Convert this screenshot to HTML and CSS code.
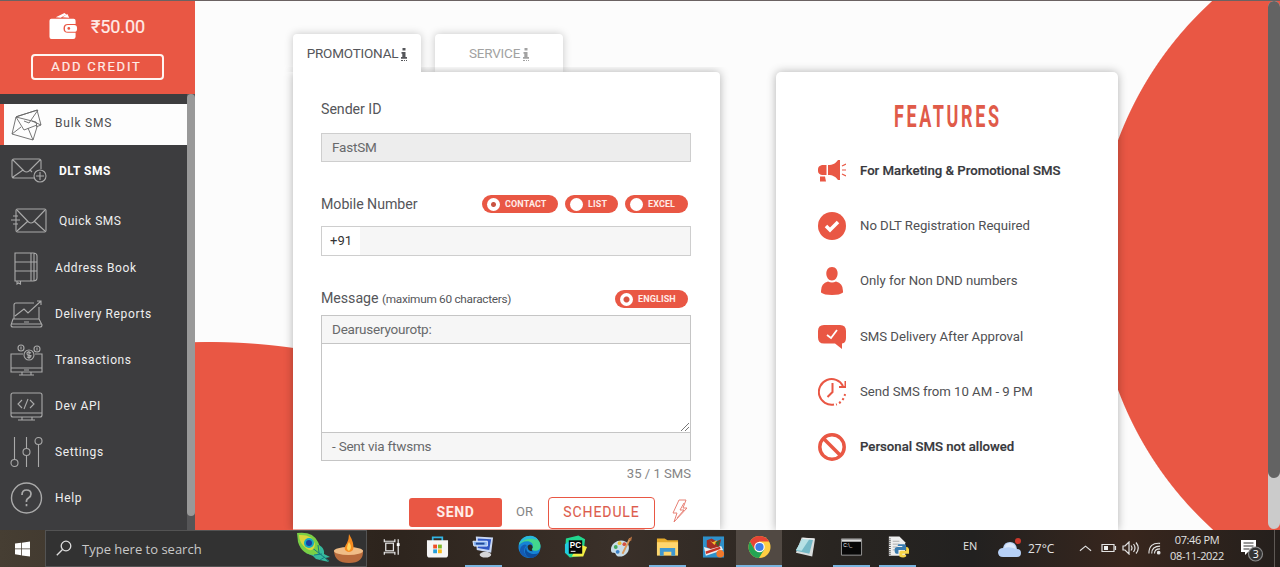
FILE: index.html
```html
<!DOCTYPE html>
<html lang="en">
<head>
<meta charset="utf-8">
<title>Bulk SMS</title>
<link rel="stylesheet" href="styles.css">
</head>
<body>
<div class="screen">
  <div class="page">
    <aside class="sidebar">
      <div class="credit">
        <div class="balance">
          <svg class="wallet" viewBox="0 0 30 28"><path fill="#fff" d="M7 5 16 .5l2 1.500-6 3.500zM14 5l5-3.500 2 4zM2.500 6.500h23q2 0 2 2V12h-8q-4.500 0-4.500 4.500t4.500 4.500h8v4q0 2.500-2.500 2.500H2.500Q.500 27.500.500 25V8.500q0-2 2-2z"/><rect x="16.500" y="13" width="12.500" height="7" rx="3" fill="#fff"/><circle cx="20.500" cy="16.500" r="1.400" fill="#e95744"/></svg>
          <span>₹50.00</span>
        </div>
        <div class="add">ADD CREDIT</div>
      </div>
      <div class="menu">
        <nav class="items">
          <div class="item active"><svg viewBox="0 0 34 34"><path d="M6 9 27 2l4 15-5 2M6 9l2-1 20-6-9 13-5-2M31 17l-9-4M6 9l20 5 1 5-4 13L2 26 6 9l8 13 13-5M2 26l9-7M23 32l-5-12"/></svg><span>Bulk SMS</span></div>
          <div class="item dlt"><svg viewBox="0 0 36 34"><path d="M24 24H3q-2 0-2-2V7q0-2 2-2h25q2 0 2 2v8M2 6l11 11q2.500 2 5 0L29 6M2 23l10-7M21 18l-2-2"/><circle cx="29" cy="22" r="6"/><path d="M29 18v8M25 22h8"/></svg><span>DLT SMS</span></div>
          <div class="item quick"><svg viewBox="0 0 36 34"><rect x="5" y="5" width="30" height="23" rx="1.500"/><path d="m6 6 11.500 12q2.500 2 5 0L34 6M6 27l11-10M34 27 23 17M2 12h5M0 16h9M2 20h5"/></svg><span>Quick SMS</span></div>
          <div class="item addr"><svg viewBox="0 0 34 34"><path d="M5 2h18q4 0 4 3v22q0 3-4 3H5zM21 2v28M24 2v28M5 11h22M5 20h22M7 30v3l1.500-1 2 1v-3"/></svg><span>Address Book</span></div>
          <div class="item"><svg viewBox="0 0 34 34"><path d="M4 22V8q0-2 2-2h18M29 10v12M3 22h26l3 6q0 2-2 2H3q-2 0-2-2zM1 27h31M14 25h5M5 19l9-7 4 4L31 4M27 4h4v4"/></svg><span>Delivery Reports</span></div>
          <div class="item"><svg viewBox="0 0 34 34"><path d="M13 11H1v18h31V11h-7M1 25h31M12 29v3M21 29v3M9 32h15"/><circle cx="19" cy="12" r="5"/><circle cx="11" cy="5" r="3"/><circle cx="27" cy="6" r="3"/><path d="M21 10q-4-2-4 .5t4 2q0 3-4 1.500M19 8v8M11 3.500v3M27 4.500v3M14 27h5"/></svg><span>Transactions</span></div>
          <div class="item"><svg viewBox="0 0 34 34"><rect x="1" y="4" width="31" height="24" rx="2"/><path d="M1 24h31M12 28v3M22 28v3M8 31h17M12 11l-4 4 4 4M20 11l4 4-4 4M18 10l-4 10"/></svg><span>Dev API</span></div>
          <div class="item"><svg viewBox="0 0 34 34"><circle cx="4.500" cy="28" r="3.500"/><circle cx="16.500" cy="17" r="3.500"/><circle cx="28.500" cy="6" r="3.500"/><path d="M4.500 2v22.500M16.500 2v11.500M16.500 20.500V32M28.500 9.500V32"/></svg><span>Settings</span></div>
          <div class="item"><svg viewBox="0 0 34 34"><circle cx="16.500" cy="17" r="15" stroke-width="1.400"/><path stroke-width="1.700" d="M12 14q0-5 4.500-5t4.500 4q0 2.500-2.500 4t-2 4M16.500 23v2.200"/></svg><span>Help</span></div>
        </nav>
        <div class="side-scroll"><div class="side-thumb"></div></div>
      </div>
    </aside>

    <main class="main">
      <section class="form-col">
        <div class="tabs">
          <div class="tab current">PROMOTIONAL <b class="info"><svg viewBox="0 0 6 11"><path d="M1.500 0h3v2.500h-3zM.5 4h4v5H6v1.800H0V9h1.300V5.800H.5z"/></svg></b></div>
          <div class="tab other">SERVICE <b class="info"><svg viewBox="0 0 6 11"><path d="M1.500 0h3v2.500h-3zM.5 4h4v5H6v1.800H0V9h1.300V5.800H.5z"/></svg></b></div>
        </div>
        <div class="card form">
          <div class="label sender">Sender ID</div>
          <div class="field readonly">FastSM</div>
          <div class="row mobile">
            <div class="label">Mobile Number</div>
            <div class="pills">
              <span class="pill contact"><i class="dot on"></i>CONTACT</span>
              <span class="pill list"><i class="dot"></i>LIST</span>
              <span class="pill excel"><i class="dot"></i>EXCEL</span>
            </div>
          </div>
          <div class="field phone"><span class="code">+91</span></div>
          <div class="row message">
            <div class="label">Message <small>(maximum 60 characters)</small></div>
            <div class="pills"><span class="pill english"><i class="dot on wide"></i>ENGLISH</span></div>
          </div>
          <div class="compose">
            <div class="line">Dearuseryourotp:</div>
            <div class="area"><svg viewBox="0 0 10 10"><path d="M1 9 9 1M5 9l4-4" stroke="#777" fill="none"/></svg></div>
            <div class="line">- Sent via ftwsms</div>
          </div>
          <div class="count">35 / 1 SMS</div>
          <div class="actions">
            <div class="send">SEND</div>
            <span class="or">OR</span>
            <div class="schedule">SCHEDULE</div>
            <svg class="bolt" viewBox="0 0 16 24"><path d="M7 1h7l-3 8h4L2 23l3-9H1z"/><path d="M12 4 8 11h4L5 19"/></svg>
          </div>
        </div>
      </section>

      <section class="card features">
        <svg class="title" viewBox="0 0 120 30"><text x="0" y="26.500" textLength="181" transform="scale(.58 1)">FEATURES</text></svg>
        <div class="feature strong"><svg viewBox="0 0 28 28"><path d="M10 8c5 0 8-2 10-5h2v20h-2c-2-3-5-5-10-5zM8.500 8v10H4q-4-1-4-4v-2q0-3 4-4zM2 19.500h5l1 5H2z"/><path d="m24 9 4-2M24 13h4M24 17l4 2" stroke="#e95744" stroke-width="1.200"/></svg><span>For Marketing &amp; Promotional SMS</span></div>
        <div class="feature"><svg viewBox="0 0 28 28"><circle cx="14" cy="14" r="14"/><path d="m8 14 4 4 8-8" fill="none" stroke="#fff" stroke-width="3.500"/></svg><span>No DLT Registration Required</span></div>
        <div class="feature"><svg viewBox="0 0 28 28"><path d="M14 0c8 0 7 13.500 0 13.500S6 0 14 0zM3 24q0-8 7-9.500 4 2 8 0 7 1.500 7 9.500v1.500Q22 28 14 28T3 25.500z"/></svg><span>Only for Non DND numbers</span></div>
        <div class="feature"><svg viewBox="0 0 28 28"><path d="M6 2h16q6 0 6 6v7q0 5-4 5.500V26l-7-5.500H6q-6 0-6-6V8q0-6 6-6z"/><path d="m9 12 4 3 6-8" fill="none" stroke="#fff" stroke-width="1.800"/></svg><span>SMS Delivery After Approval</span></div>
        <div class="feature"><svg viewBox="0 0 28 28"><g fill="none" stroke="#e95744" stroke-width="2"><path d="M16 26.500A12.800 12.800 0 1 1 25 8M27.500 3v6H21M14.500 5v9L9.500 19"/><path d="M27 16A13 13 0 0 1 18 26.500" stroke-dasharray="2 2.500"/></g></svg><span>Send SMS from 10 AM - 9 PM</span></div>
        <div class="feature strong"><svg viewBox="0 0 28 28"><g fill="none" stroke="#e95744" stroke-width="3.500"><circle cx="14" cy="14" r="12.200"/><path d="m5.500 5.500 17 17"/></g></svg><span>Personal SMS not allowed</span></div>
      </section>
    </main>
    <div class="page-scroll"><div class="page-track"><div class="page-thumb"></div></div></div>
  </div>

  <footer class="taskbar">
    <div class="start"><svg viewBox="0 0 16 16"><path fill="#fff" d="M0 2.200 6.500 1.300v6.200H0zM7.300 1.200 16 0v7.500H7.300zM0 8.300h6.500v6.300L0 13.700zM7.300 8.300H16V16l-8.700-1.200z"/></svg></div>
    <div class="search">
      <svg class="lens" viewBox="0 0 16 16"><circle cx="10" cy="6" r="4.800" fill="none" stroke="#ddd" stroke-width="1.300"/><path d="M6.500 9.500.8 15.200" stroke="#ddd" stroke-width="1.300"/></svg>
      <span>Type here to search</span>
      <svg class="festive" viewBox="0 0 68 34">
        <path fill="#35b99d" d="M16 12q13 2 12 11l6 3-5 1 4 4-9-2-4-1-3-3-7-3-1-5z"/>
        <path fill="#79cf45" d="M1 2q16-2 21 9 5 10-3 13-13 0-17-13z"/>
        <path stroke="#157c83" fill="none" d="m10 12 23 18M18 24l8-1M24 29l5-3M22 14l1 8"/>
        <path fill="#d9d83c" d="M3 4q13-1 16 9-1 9-8 5Q3 12 3 4z"/>
        <circle cx="13" cy="12" r="5" fill="#16aac0"/><circle cx="13" cy="12" r="3" fill="#173fa3"/>
        <path fill="#b96c3d" d="M38 19q14 5 29 0 1 13-14 13T38 19z"/><ellipse cx="52.500" cy="20" rx="14.500" ry="4" fill="#f0bd87"/><path fill="#f68b20" d="M53 3q6 10 4 16-4 4-8 0-1-3 2-7 2-4 2-9z"/><path fill="#ffd65e" d="M53 11q4 6 0 9-4-2 0-9z"/>
      </svg>
    </div>
    <div class="apps">
      <div class="app"><svg viewBox="0 0 24 24"><g fill="none" stroke="#e5e5e5" stroke-width="1.300"><rect x="6" y="8" width="8" height="8"/><path d="M4 6h12M4 18h12M4.500 4v3M15.500 4v3M4.500 17v3M15.500 17v3M19 4v16"/></g><path fill="#fff" d="M17.500 8h3v3h-3z"/></svg></div>
      <div class="app"><svg viewBox="0 0 24 24"><path d="M7 6V2h10v4" fill="none" stroke="#32b5e5" stroke-width="1.800"/><path d="M1 5h22v15q0 3-3 3H4q-3 0-3-3z" fill="#f5f5f5"/><path fill="#ef5027" d="M7.500 9.500h4v4h-4z"/><path fill="#7eb829" d="M12.500 9.500h4v4h-4z"/><path fill="#24a0dc" d="M7.500 14.500h4v4h-4z"/><path fill="#fbb91b" d="M12.500 14.500h4v4h-4z"/></svg></div>
      <div class="app run"><svg viewBox="0 0 24 24"><path d="m4 1 18 1-2 16-15-3z" fill="#cad8f3"/><path d="m6 3 14 1-2 11-12-2z" fill="#2f57c4"/><path d="M1 6h15v5H2z" fill="#8ab5f2" stroke="#e5efff"/><path d="M4 8.500h9" stroke="#214897" stroke-width="2"/><ellipse cx="14" cy="20" rx="6" ry="3" fill="#d5d5d8"/></svg></div>
      <div class="app"><svg viewBox="0 0 24 24"><circle cx="12" cy="12" r="11.500" fill="#1684d6"/><path d="M1 10C3-3 23-2 23.500 11c0 6-8 6-9 3 3-5-1-8-5-8-4 0-7 2-8.500 4z" fill="#43d58d"/><path d="M1 10C4-2 18-2 21 5 14 2 5 3 1 10z" fill="#29b8df"/><path d="M9 10q-6 7 2 13Q-1 21 3 12q3-4 6-2z" fill="#145bb4"/><path d="M10 9q-4 8 4 10 5 1 8-1-5 7-11 5-7-5-1-14z" fill="#0d4d9d"/><path d="M10 11q3-3 5 0 1 2-.5 3-.5 2 1 2.500-6 0-5.500-5.500z" fill="#282724"/></svg></div>
      <div class="app"><svg viewBox="0 0 24 24"><path d="M2 3 15 0l7 4-2 17-14 2-5-5z" fill="#22d88f"/><path d="m16 9 8 3-4 10H8z" fill="#f4ee43"/><path d="M1 9 8 4 6 21l-5-3z" fill="#21cbe0"/><path d="M5 5h14v14H5z" fill="#080808"/><text x="6" y="13" font-size="8.500" font-weight="700" fill="#fff">PC</text><path fill="#fff" d="M7 16h5v1H7z"/></svg></div>
      <div class="app"><svg viewBox="0 0 24 24"><path d="M1 15C1 5 15 2 19 9c3 7-3 13-9 13-5 0-3-4-6-4q-3 0-3-3z" fill="#c8dce8"/><circle cx="6" cy="12" r="2" fill="#42a85d"/><circle cx="10" cy="8" r="2" fill="#e8bb33"/><circle cx="15" cy="9" r="2" fill="#d45040"/><circle cx="8" cy="17" r="2" fill="#397fc6"/><path d="m13 19 8-16" stroke="#d99b5d" stroke-width="2"/><path d="m19 4 4-3-1 5z" fill="#b97443"/></svg></div>
      <div class="app run"><svg viewBox="0 0 24 24"><path fill="#e5aa2a" d="M1 3h8l3 2h11v15H1z"/><path fill="#ffd66d" d="M1 7h22v14H1z"/><path fill="#3f98d0" d="M4 21v-8h16v8h-4v-4H8v4z"/></svg></div>
      <div class="app"><svg viewBox="0 0 24 24"><path fill="#2e91cb" d="M1 1h22v22H1z"/><path fill="#a62d23" d="m5 5 5-2 5 3 5-2-2 8-7 3-6-3z"/><path fill="#f4bd30" d="m8 5 3 2 5-2-3 5z"/><path fill="#eee" d="m2 12 7 2 11-3 2 4-18 6z"/><path d="m4 18 15-5" stroke="#c83428" stroke-width="2.500"/><circle cx="19" cy="19" r="4" fill="#f2782b"/><path fill="#385e2d" d="m14 7 5-2-2 7z"/></svg></div>
      <div class="app run focus"><svg viewBox="0 0 24 24"><circle cx="12" cy="12" r="11.500" fill="#ffce43"/><path fill="#e64435" d="M2 6.300A11.500 11.500 0 0 1 22 6.300H12L7 15z"/><path fill="#24a453" d="M2 6.300A11.500 11.500 0 0 0 11.500 23.500L17 14.500 12 17 7 15z"/><circle cx="12" cy="12" r="5.500" fill="#fff"/><circle cx="12" cy="12" r="4.300" fill="#3d7de8"/></svg></div>
      <div class="app"><svg viewBox="0 0 24 24"><path fill="#d8dddd" d="m8 2 14 1-3 19-17-4z"/><path fill="#74b9c7" d="m9 3 11 1-4 15-14-3z"/><path fill="#b6e1e5" d="m9 3 7 1-8 12-6-1z"/><path d="m9 3 12 1" stroke="#eee" stroke-width="1.500"/></svg></div>
      <div class="app run"><svg viewBox="0 0 24 24"><path fill="#080808" stroke="#999" d="M1.500 3.500h21v17h-21z"/><path fill="#ddd" d="M2 4h20v2.500H2z"/><text x="3.500" y="12" font-size="5" fill="#fff">C:\_</text></svg></div>
      <div class="app run"><svg viewBox="0 0 24 24"><path fill="#eee" d="M3 1h11l6 6v14H3z"/><path d="M4 3v18" stroke="#555" stroke-width="2" stroke-dasharray="1 1"/><path stroke="#aaa" d="M7 6h7M7 9h7M7 12h5M7 15h3"/><path fill="#397baf" d="M13 9h6q2 0 2 2v4h-8v4h-2q-2 0-2-4 0-3 3-3h5v-1h-5z"/><path fill="#f6d449" d="M21 12h1q3 1 2 7h-7v1h4v2q-3 2-7 0v-4q0-2 2-2h5z"/></svg></div>
    </div>
    <div class="tray">
      <span class="lang">EN</span>
      <svg class="cloud" viewBox="0 0 24 20"><path fill="#b6d0f6" d="M5 19q-5 0-5-5 1-4 5-4 1-6 7-6t7 7q4 0 4 4 0 4-4 4z"/><path fill="#dce8fb" d="M6 10q3-7 9-4 3 2 3 5Q12 8 6 10z"/><circle cx="20" cy="3" r="3" fill="#cc382c"/></svg>
      <span class="temp">27°C</span>
      <svg class="chev" viewBox="0 0 14 8"><path d="m1 7 6-5 6 5"/></svg>
      <svg class="batt" viewBox="0 0 16 12"><path d="M1 2.500h12v7H1zM14.500 4v4"/><path fill="#eee" stroke="none" d="M3 4h4v4H3z"/></svg>
      <svg class="vol" viewBox="0 0 18 14"><path d="M1 5h2l4-4v12L3 9H1zM9 4.500q2 2.500 0 5M11.500 3q3 4 0 8M14 1.500q4.500 5.500 0 11"/></svg>
      <svg class="wifi" viewBox="0 0 14 14"><path d="M1 13Q1 1 13 2M4 13q0-8 9-8M7 13q0-5 6-5"/><circle cx="11.500" cy="12" r="1.400" fill="#eee"/></svg>
      <div class="clock"><div>07:46 PM</div><div>08-11-2022</div></div>
      <svg class="notif" viewBox="0 0 24 24"><path fill="#fff" d="M1 1h15v12H8l-3 3v-3H1z"/><path d="M3.500 4h10M3.500 7h10M3.500 10h6"/><circle cx="15.500" cy="15" r="7" fill="#333" stroke="#888"/><text x="12.800" y="19" font-size="10.500" fill="#fff">3</text></svg>
      <i class="peek"></i>
    </div>
  </footer>
</div>
</body>
</html>
```

FILE: styles.css
```css
* { box-sizing: border-box; }
body { margin: 0; font-family: Roboto, "Liberation Sans", sans-serif; color: #55565a; }
svg { display: block; flex: none; }
.screen { width: 1280px; height: 567px; overflow: hidden; display: grid; grid-template-rows: 529.5px 37.5px; }
.page { display: grid; grid-template-columns: 195px 1fr 12px; overflow: hidden; border-top: 1px solid #6b6262; }

.sidebar { display: flex; flex-direction: column; background: #3d3d3f; }
.credit { height: 93px; background: #e95744; display: flex; flex-direction: column; align-items: center; }
.balance { display: flex; align-items: center; gap: 13px; height: 32px; margin-top: 9px; padding-right: 1px; color: #ffece8; font-size: 18px; letter-spacing: -.1px; }
.wallet { width: 29px; height: 28px; margin-top: -1px; }
.balance span { padding-top: 1px; -webkit-text-stroke: .2px; }
.add { width: 133px; height: 26px; margin-top: 12px; padding-right: 2px; border: 2px solid #fff5f2; border-radius: 4px; color: #ffece8; font-size: 13px; line-height: 22px; letter-spacing: 1.8px; text-align: center; -webkit-text-stroke: .2px; }
.menu { flex: 1; display: grid; grid-template-columns: 187px 8px; }
.items { padding-top: 10px; }
.item { height: 46px; display: flex; align-items: center; padding-left: 10px; font-size: 12px; letter-spacing: .62px; color: #efefef; }
.item svg { width: 34px; height: 34px; margin-right: 11px; fill: none; stroke: #aaa; stroke-width: 1.1; }
.item.active { height: 41px; background: #fdfdfd; color: #4e4e50; border-left: 4px solid #e95744; padding-left: 6px; letter-spacing: .8px; }
.item.active svg { stroke: #666; stroke-width: .9; }
.item.active span { padding-bottom: 3px; }
.item.dlt { height: 52px; font-weight: 700; letter-spacing: .5px; color: #fff; }
.item.dlt svg, .item.quick svg { width: 36px; margin-left: 1px; margin-right: 12px; }
.item.quick { height: 47px; letter-spacing: .5px; }
.item.addr { height: 47px; }
.side-scroll { background: #555557; }
.side-thumb { height: 422px; border-radius: 4px; background: #999; }

.main { display: grid; grid-template-columns: 427px 342px; column-gap: 56px; padding-left: 98px;
  background: radial-gradient(circle at 1257.5px 264px, #e95744 356.5px, transparent 357.5px), radial-gradient(circle at 14px 941px, #e95744 599.5px, transparent 600.5px), #fcfcfc; }
.form-col { padding-top: 33px; display: flex; flex-direction: column; }
.tabs { display: flex; gap: 14px; height: 38px; }
.tab { width: 128px; display: flex; align-items: center; justify-content: center; gap: 3px; font-size: 13.5px; letter-spacing: -.2px; border-radius: 4px 4px 0 0; background: #fff; box-shadow: 0 0 9px rgba(0, 0, 0, .22); }
.tab.other { color: #a2a2a2; }
.info { border-bottom: 1px dotted currentColor; padding-bottom: 1px; margin-top: 3px; }
.info svg { width: 6px; height: 11px; fill: currentColor; }
.card { background: #fff; box-shadow: 0 0 10px rgba(0, 0, 0, .3); }
.form { position: relative; flex: 1; padding: 28px 29px 0 28px; border-radius: 0 4px 0 0; clip-path: inset(-5px -14px 0 -14px); }
.current { position: relative; z-index: 1; clip-path: inset(-12px -12px 0 -12px); }
.label { font-size: 14.2px; line-height: 18px; letter-spacing: -.04px; }
.label small { font-size: 11.8px; letter-spacing: -.28px; }
.field { height: 29px; margin-top: 15px; border: 1px solid #cecece; background: #ededed; padding-left: 10px; font-size: 13.5px; letter-spacing: -.2px; line-height: 27px; color: #68696b; }
.row { display: flex; justify-content: space-between; align-items: center; height: 18px; padding-right: 3px; }
.mobile { margin-top: 33px; }
.phone { height: 30px; margin-top: 13px; padding: 0; background: #f6f6f6; }
.code { display: block; width: 38px; height: 28px; background: #fff; padding-left: 8px; font-size: 13px; letter-spacing: 0; line-height: 28px; color: #333; }
.message { margin-top: 34px; }
.message .label { margin-top: -2px; }
.pills { display: flex; gap: 7px; }
.pill { display: flex; align-items: center; height: 18px; padding-left: 5px; border-radius: 9px; background: #e95744; color: #ffebe7; font-size: 9px; font-weight: 700; letter-spacing: .12px; }
.contact { width: 76px; }
.list { width: 53px; }
.excel { width: 63px; }
.english { width: 73px; }
.dot { width: 13px; height: 13px; margin-right: 5px; border-radius: 50%; background: #fff; }
.dot.on { background: radial-gradient(circle, #c95342 2px, #fff 3px); }
.dot.wide { background: radial-gradient(circle, #d85341 2.5px, #fff 3.5px); }
.compose { margin-top: 7px; border: 1px solid #c5c5c5; color: #68696b; }
.line { height: 27px; padding-left: 10px; font-size: 13.5px; letter-spacing: -.22px; line-height: 26px; background: #f6f6f6; }
.area { height: 90px; border: solid #c5c5c5; border-width: 1px 0; display: flex; align-items: flex-end; justify-content: flex-end; }
.area svg { width: 10px; height: 10px; }
.count { margin-top: 4px; text-align: right; font-size: 13.1px; line-height: 18px; color: #858585; }
.actions { display: flex; align-items: center; height: 32px; padding-left: 88px; margin-top: 14px; }
.send { width: 93px; height: 29px; border-radius: 3px; background: #e95744; color: #ffece8; text-align: center; font-size: 14px; line-height: 28px; font-weight: 700; letter-spacing: .65px; margin-top: -1px; }
.or { margin-left: 14px; width: 32px; font-size: 13px; color: #858585; margin-top: -4px; }
.schedule { width: 107px; height: 32px; border: 1.5px solid #e95744; border-radius: 4px; color: #dd5d4d; text-align: center; font-size: 14px; line-height: 29px; letter-spacing: .9px; -webkit-text-stroke: .1px; }
.bolt { width: 16px; height: 24px; margin-left: 17px; margin-top: -5px; fill: none; stroke: #e78075; stroke-width: 1; }

.features { margin-top: 71px; border-radius: 5px 5px 0 0; padding: 28px 0 0 42px; }
.title { width: 120px; height: 30px; margin-left: 76px; margin-bottom: 13px; font-size: 31px; font-weight: 700; fill: #e05b49; overflow: visible; }
.feature { height: 55.3px; display: flex; align-items: center; gap: 14px; font-size: 13.2px; letter-spacing: -.03px; color: #4f5053; }
.feature svg { width: 28px; height: 28px; fill: #e95744; }
.feature span { padding-bottom: 1px; }
.feature.strong { font-weight: 500; letter-spacing: 0; color: #37383c; -webkit-text-stroke: .2px; }
.page-scroll { background: #e95744; }
.page-track { height: 528px; border-radius: 6px; background: #cbcbcb; }
.page-thumb { height: 477px; border-radius: 6px; background: #636363; }

.taskbar { display: flex; font-family: "Open Sans", "Noto Sans", sans-serif; color: #e2e2e2; background: linear-gradient(90deg, #463e33, #2d241d 30%, #3a3029 48%, #292521 65%, #222120 76%, #38261d 88%, #241f1c); }
.start { width: 45px; padding: 11px 0 0 15px; }
.start svg { width: 15px; height: 16px; }
.search { width: 322px; border: 1px solid #535353; background: #323232; display: flex; align-items: center; padding-left: 10px; font-size: 13px; }
.lens { width: 16px; height: 16px; margin-right: 10px; }
.search span { width: 214px; padding-top: 1px; color: #c8c8c8; }
.festive { width: 68px; height: 34px; }
.apps { display: flex; padding-left: 1px; }
.app { width: 46px; display: flex; justify-content: center; align-items: center; border-bottom: 2px solid transparent; }
.app svg { width: 23px; height: 24px; font-family: "Liberation Sans", sans-serif; }
.app.run { background: linear-gradient(#79b4df, #79b4df) 50% 100% / 37px 2px no-repeat border-box; }
.app.focus { background: #514943; border-bottom-color: #79b4df; }
.tray { display: flex; align-items: center; font-size: 12px; }
.tray svg { fill: none; stroke: #e2e2e2; stroke-width: 1.2; }
.lang { width: 37px; margin-left: 43px; font-size: 11px; margin-top: -5px; }
.tray .cloud { width: 24px; height: 20px; margin-left: -2px; margin-right: 6px; stroke: none; }
.temp { width: 51px; }
.chev { width: 13px; height: 8px; margin-right: 9px; }
.batt { width: 16px; height: 12px; margin-right: 5px; }
.vol { width: 18px; height: 14px; margin-right: 8px; }
.wifi { width: 13px; height: 14px; margin-right: 8px; }
.clock { width: 56px; text-align: center; font-size: 11px; line-height: 16px; letter-spacing: -.35px; white-space: nowrap; }
.tray .notif { width: 24px; height: 24px; margin-left: 15px; margin-top: 5px; stroke: none; }
.notif path + path { stroke: #333; }
.peek { align-self: stretch; width: 1px; margin-left: 10px; background: #5e5955; }
```
